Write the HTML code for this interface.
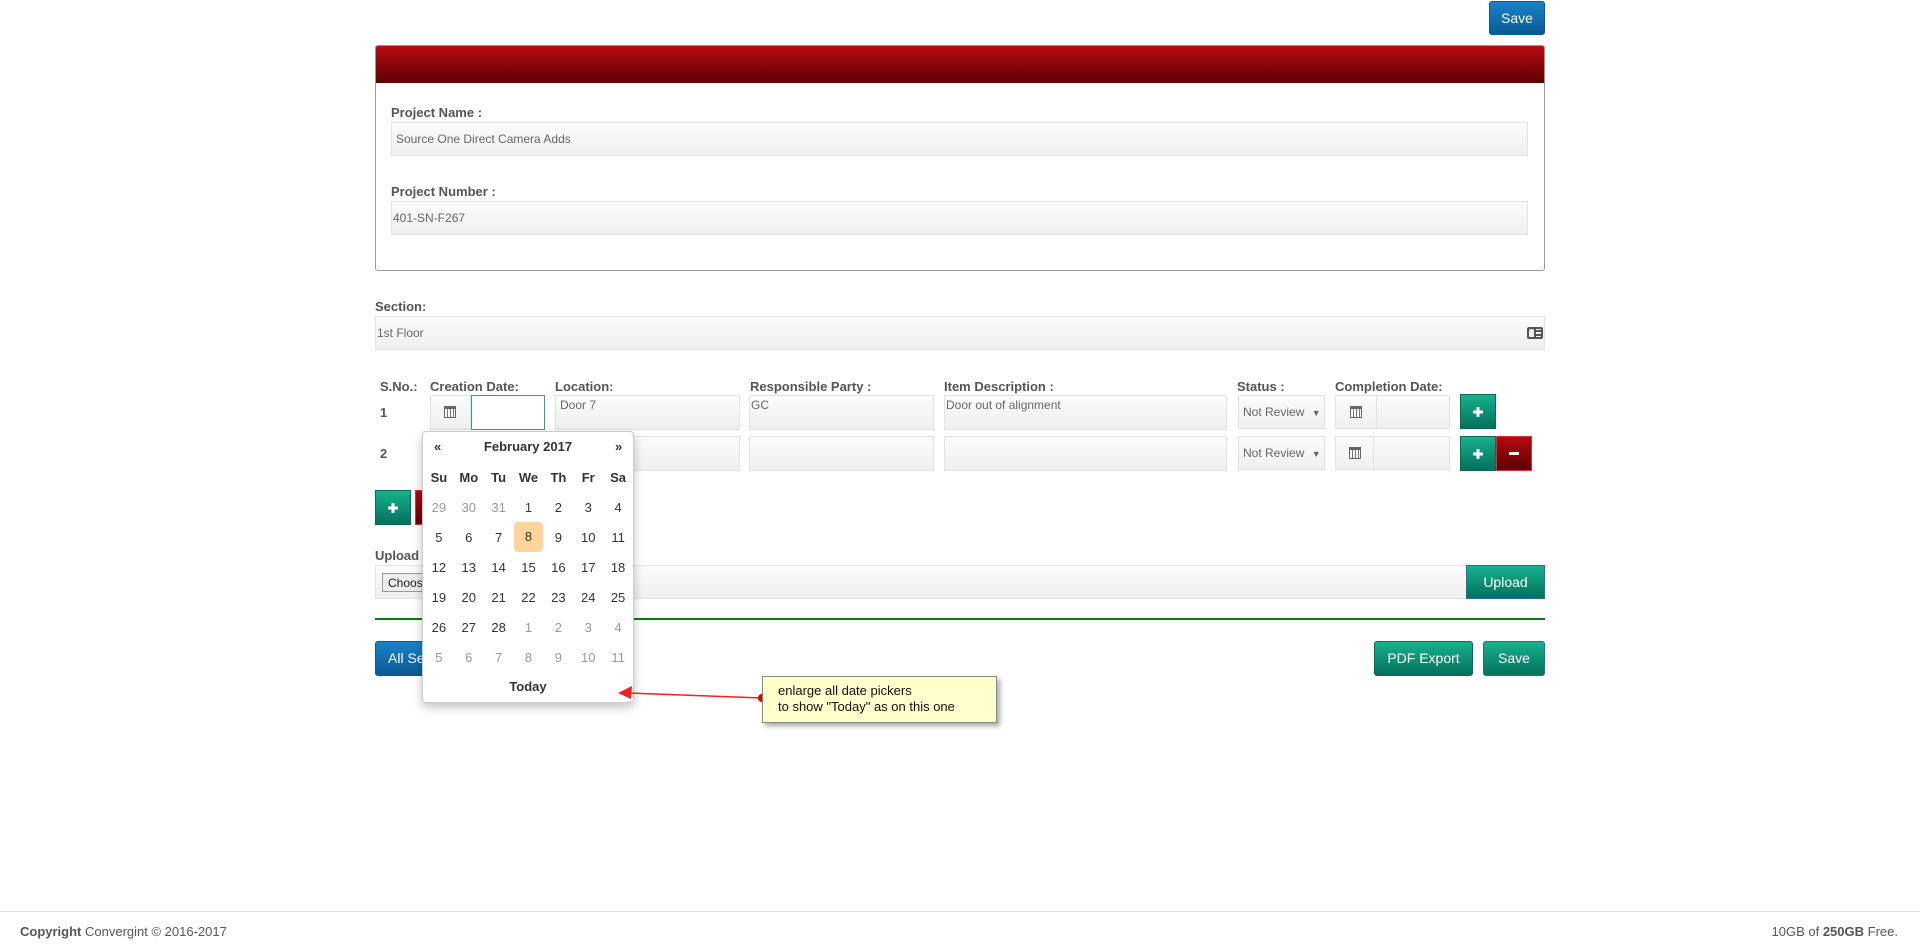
<!DOCTYPE html>
<html><head><meta charset="utf-8"><style>
*{box-sizing:border-box}
body{margin:0;width:1920px;height:950px;background:#fff;font-family:"Liberation Sans",sans-serif;color:#555;font-size:12px;position:relative;overflow:hidden}
.a{position:absolute}
.btn-blue{background:linear-gradient(#1a82c8,#0a5a94);border:1px solid #0a5a94;border-radius:3px;color:#fff;font-size:14px;text-align:center}
.btn-green{background:linear-gradient(#17b28f,#03705a);border:1px solid #0a6b55;border-radius:3px;color:#fff;font-size:14px;text-align:center}
.btn-red{background:linear-gradient(#b30a0f,#5d0005);border:1px solid #d9313a;color:#fff;text-align:center}
.inp{background:linear-gradient(#fcfcfc,#efefef);border:1px solid #e2e2e2;color:#666;font-size:12px;padding-left:4px}
.lbl{font-weight:bold;color:#555;font-size:13px}
.cal{position:absolute;width:12px;height:12px;border:1px solid #666;border-top:3px solid #666;background:repeating-linear-gradient(90deg,transparent 0 2px,#777 2px 3px),#fff}
.dp td{width:30px;height:30px;text-align:center;font-size:13px;color:#333;padding:0}
.dp .o{color:#999}
.plus{position:absolute;left:50%;top:50%}
</style></head><body>
<div class="a btn-blue" style="left:1489px;top:1px;width:56px;height:34px;line-height:32px">Save</div>

<div class="a" style="left:375px;top:45px;width:1170px;height:226px;border:1px solid #999;border-radius:3px;overflow:hidden">
 <div style="height:37px;background:linear-gradient(#b60b10,#5f0004)"></div>
</div>
<div class="a lbl" style="left:391px;top:105px">Project Name :</div>
<div class="a inp" style="left:391px;top:122px;width:1137px;height:34px;line-height:32px">Source One Direct Camera Adds</div>
<div class="a lbl" style="left:391px;top:184px">Project Number :</div>
<div class="a inp" style="left:391px;top:201px;width:1137px;height:34px;line-height:32px;padding-left:1px">401-SN-F267</div>

<div class="a lbl" style="left:375px;top:299px">Section:</div>
<div class="a inp" style="left:375px;top:316px;width:1170px;height:34px;line-height:32px;padding-left:1px">1st Floor</div>
<div class="a" style="left:1527px;top:327px;width:16px;height:12px;background:#555;border-radius:2px"><div style="position:absolute;left:2px;top:2px;width:5px;height:8px;background:#eee;border-radius:2px 2px 0 0"></div><div style="position:absolute;left:9px;top:2px;width:5px;height:8px;border-top:1.5px solid #eee;border-bottom:1.5px solid #eee"></div><div style="position:absolute;left:9px;top:5px;width:5px;height:1.5px;background:#eee"></div></div>

<div class="a lbl" style="left:380px;top:379px">S.No.:</div>
<div class="a lbl" style="left:430px;top:379px">Creation Date:</div>
<div class="a lbl" style="left:555px;top:379px">Location:</div>
<div class="a lbl" style="left:750px;top:379px">Responsible Party :</div>
<div class="a lbl" style="left:944px;top:379px">Item Description :</div>
<div class="a lbl" style="left:1237px;top:379px">Status :</div>
<div class="a lbl" style="left:1335px;top:379px">Completion Date:</div>

<div class="a" style="left:380px;top:405px;font-weight:bold;font-size:13px">1</div>
<div class="a" style="left:380px;top:446px;font-weight:bold;font-size:13px">2</div>

<div class="a inp" style="left:430px;top:395px;width:41px;height:35px"></div>
<div class="cal" style="left:444px;top:406px"></div>
<div class="a" style="left:471px;top:395px;width:74px;height:35px;border:1px solid #27a58a;background:#fff"></div>

<div class="a inp" style="left:555px;top:395px;width:185px;height:35px;padding-top:2px">Door 7</div>
<div class="a inp" style="left:749px;top:395px;width:185px;height:35px;padding-top:2px;padding-left:1px">GC</div>
<div class="a inp" style="left:944px;top:395px;width:283px;height:35px;padding-top:2px;padding-left:1px">Door out of alignment</div>
<div class="a inp" style="left:555px;top:436px;width:185px;height:35px"></div>
<div class="a inp" style="left:749px;top:436px;width:185px;height:35px"></div>
<div class="a inp" style="left:944px;top:436px;width:283px;height:35px"></div>

<div class="a inp" style="left:1238px;top:395px;width:87px;height:34px;line-height:32px">Not Review <span style="font-size:9px;margin-left:4px">▼</span></div>
<div class="a inp" style="left:1238px;top:436px;width:87px;height:34px;line-height:32px">Not Review <span style="font-size:9px;margin-left:4px">▼</span></div>
<div class="a inp" style="left:1335px;top:395px;width:115px;height:34px"></div>
<div class="a" style="left:1376px;top:396px;width:1px;height:32px;background:#e2e2e2"></div>
<div class="cal" style="left:1350px;top:406px"></div>
<div class="a inp" style="left:1335px;top:436px;width:115px;height:34px"></div>
<div class="a" style="left:1373px;top:437px;width:1px;height:32px;background:#e2e2e2"></div>
<div class="cal" style="left:1349px;top:447px"></div>

<div class="a btn-green" style="left:1460px;top:394px;width:36px;height:35px;border-radius:0"><svg class="plus" style="margin:-5px 0 0 -5px" width="10" height="10"><path d="M3.5 0h3v3.5h3.5v3h-3.5v3.5h-3v-3.5h-3.5v-3h3.5z" fill="#fff"/></svg></div>
<div class="a btn-green" style="left:1460px;top:436px;width:36px;height:35px;border-radius:0"><svg class="plus" style="margin:-5px 0 0 -5px" width="10" height="10"><path d="M3.5 0h3v3.5h3.5v3h-3.5v3.5h-3v-3.5h-3.5v-3h3.5z" fill="#fff"/></svg></div>
<div class="a btn-red" style="left:1496px;top:436px;width:36px;height:35px"><div class="plus" style="margin:-2px 0 0 -5px;width:10px;height:3px;background:#fff"></div></div>

<div class="a btn-green" style="left:375px;top:490px;width:36px;height:35px;border-radius:0"><svg class="plus" style="margin:-5px 0 0 -5px" width="10" height="10"><path d="M3.5 0h3v3.5h3.5v3h-3.5v3.5h-3v-3.5h-3.5v-3h3.5z" fill="#fff"/></svg></div>
<div class="a btn-red" style="left:415px;top:490px;width:30px;height:35px"></div>

<div class="a lbl" style="left:375px;top:548px">Upload</div>
<div class="a inp" style="left:375px;top:565px;width:1170px;height:34px"></div>
<div class="a" style="left:382px;top:573px;width:60px;height:19px;border:1px solid #999;background:#eee;font-size:12px;color:#222;padding:2px 5px">Choose</div>
<div class="a btn-green" style="left:1466px;top:565px;width:79px;height:34px;line-height:32px;border-radius:0;border-color:#1a6fb0">Upload</div>
<div class="a" style="left:375px;top:618px;width:1170px;height:2px;background:#0a7a0a"></div>

<div class="a btn-blue" style="left:375px;top:641px;width:70px;height:35px;line-height:33px;text-align:left;padding-left:12px;overflow:hidden;white-space:nowrap">All Sections</div>
<div class="a btn-green" style="left:1374px;top:641px;width:99px;height:35px;line-height:33px">PDF Export</div>
<div class="a btn-green" style="left:1483px;top:641px;width:62px;height:35px;line-height:33px;border-color:#1a6fb0">Save</div>

<div class="a dp" style="left:422px;top:431px;width:212px;height:272px;background:#fff;border:1px solid #ccc;border-radius:4px;box-shadow:0 4px 10px rgba(0,0,0,.25)">
 <div style="position:absolute;left:0;top:7px;width:210px;font-size:13px;color:#333;font-weight:bold">
  <span style="position:absolute;left:11px">«</span>
  <span style="position:absolute;left:0;width:210px;text-align:center">February 2017</span>
  <span style="position:absolute;left:192px">»</span>
 </div>
 <table style="position:absolute;left:1px;top:30px;border-collapse:collapse">
 <tr><td style="font-weight:bold">Su</td><td style="font-weight:bold">Mo</td><td style="font-weight:bold">Tu</td><td style="font-weight:bold">We</td><td style="font-weight:bold">Th</td><td style="font-weight:bold">Fr</td><td style="font-weight:bold">Sa</td></tr>
 <tr><td class="o">29</td><td class="o">30</td><td class="o">31</td><td>1</td><td>2</td><td>3</td><td>4</td></tr>
 <tr><td>5</td><td>6</td><td>7</td><td><div style="background:#fdd49a;border-radius:4px;width:29px;height:30px;line-height:30px;margin:0 auto">8</div></td><td>9</td><td>10</td><td>11</td></tr>
 <tr><td>12</td><td>13</td><td>14</td><td>15</td><td>16</td><td>17</td><td>18</td></tr>
 <tr><td>19</td><td>20</td><td>21</td><td>22</td><td>23</td><td>24</td><td>25</td></tr>
 <tr><td>26</td><td>27</td><td>28</td><td class="o">1</td><td class="o">2</td><td class="o">3</td><td class="o">4</td></tr>
 <tr><td class="o">5</td><td class="o">6</td><td class="o">7</td><td class="o">8</td><td class="o">9</td><td class="o">10</td><td class="o">11</td></tr>
 </table>
 <div style="position:absolute;left:0;width:210px;top:247px;text-align:center;font-weight:bold;font-size:13px;color:#333">Today</div>
</div>

<svg class="a" style="left:610px;top:680px" width="160" height="30"><line x1="152" y1="18" x2="18" y2="13" stroke="#e22" stroke-width="1.5"/><polygon points="8,13 22,6 21,19" fill="#e22"/><circle cx="152" cy="18" r="4" fill="#d00"/></svg>
<div class="a" style="left:762px;top:676px;width:235px;height:47px;background:#ffffcc;border:1px solid #888;box-shadow:3px 3px 5px rgba(0,0,0,.35);font-size:13px;color:#111;padding:6px 0 0 15px;line-height:16px">enlarge all date pickers<br>to show "Today" as on this one</div>

<div class="a" style="left:0;top:911px;width:1920px;height:1px;background:#e5e5e5"></div>
<div class="a" style="left:20px;top:924px;font-size:13px;color:#555"><b>Copyright</b> Convergint © 2016-2017</div>
<div class="a" style="right:22px;top:924px;font-size:13px;color:#555">10GB of <b>250GB</b> Free.</div>
</body></html>
